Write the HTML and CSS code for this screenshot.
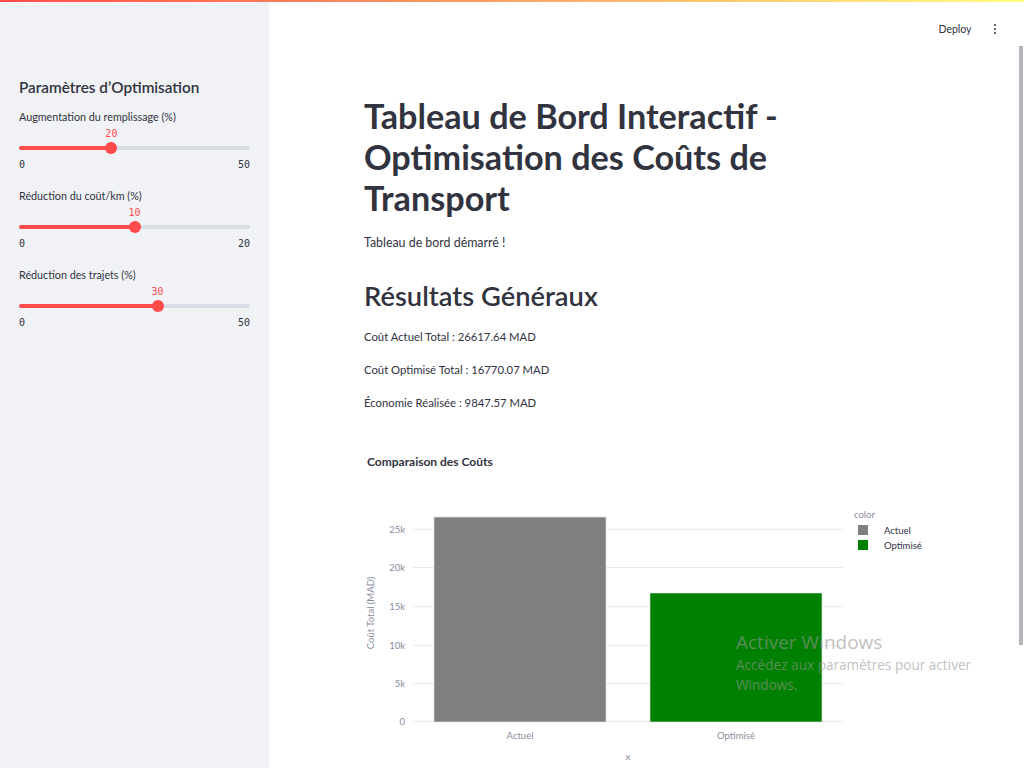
FILE: index.html
```html
<!DOCTYPE html>
<html lang="fr">
<head>
<meta charset="utf-8">
<title>Tableau de Bord</title>
<link rel="stylesheet" href="styles.css">
</head>
<body>
<div class="decoration"></div>
<div class="app">
  <aside class="sidebar">
    <h2 class="side-title">Paramètres d’Optimisation</h2>
    <div class="slider">
      <div class="slider-label">Augmentation du remplissage (%)</div>
      <div class="rail">
        <div class="track"><div class="fill" style="width:40%"></div></div>
        <div class="thumb" style="left:40%"><span class="thumb-value">20</span></div>
      </div>
      <div class="minmax"><span>0</span><span>50</span></div>
    </div>
    <div class="slider">
      <div class="slider-label">Réduction du coût/km (%)</div>
      <div class="rail">
        <div class="track"><div class="fill" style="width:50%"></div></div>
        <div class="thumb" style="left:50%"><span class="thumb-value">10</span></div>
      </div>
      <div class="minmax"><span>0</span><span>20</span></div>
    </div>
    <div class="slider">
      <div class="slider-label">Réduction des trajets (%)</div>
      <div class="rail">
        <div class="track"><div class="fill" style="width:60%"></div></div>
        <div class="thumb" style="left:60%"><span class="thumb-value">30</span></div>
      </div>
      <div class="minmax"><span>0</span><span>50</span></div>
    </div>
  </aside>
  <main class="main">
    <header class="toolbar">
      <span class="deploy">Deploy</span>
      <span class="kebab"><i></i><i></i><i></i></span>
    </header>
    <section class="content">
      <h1 class="title">Tableau de Bord Interactif -<br>Optimisation des Coûts de<br>Transport</h1>
      <p class="first">Tableau de bord démarré !</p>
      <h2 class="section">Résultats Généraux</h2>
      <p class="stat">Coût Actuel Total : 26617.64 MAD</p>
      <p class="stat">Coût Optimisé Total : 16770.07 MAD</p>
      <p class="stat">Économie Réalisée : 9847.57 MAD</p>
      <svg class="chart" width="566" height="340" viewBox="0 0 566 340">
        <text class="c-title" x="3" y="26">Comparaison des Coûts</text>
        <g class="grid">
          <line x1="49" y1="89.5" x2="479" y2="89.5"/>
          <line x1="49" y1="127.5" x2="479" y2="127.5"/>
          <line x1="49" y1="166.5" x2="479" y2="166.5"/>
          <line x1="49" y1="205.5" x2="479" y2="205.5"/>
          <line x1="49" y1="243.5" x2="479" y2="243.5"/>
          <line x1="49" y1="281.5" x2="479" y2="281.5"/>
        </g>
        <rect x="70" y="77" width="172" height="205" fill="#808080" stroke="#e5e5e5" stroke-width="0.6"/>
        <rect x="286" y="153" width="172" height="129" fill="#008000" stroke="#e5e5e5" stroke-width="0.6"/>
        <g class="ytick">
          <text x="41" y="93">25k</text>
          <text x="41" y="131">20k</text>
          <text x="41" y="170">15k</text>
          <text x="41" y="209">10k</text>
          <text x="41" y="247">5k</text>
          <text x="41" y="285">0</text>
        </g>
        <text class="ytitle" transform="translate(10 173) rotate(-90)">Coût Total (MAD)</text>
        <g class="xtick">
          <text x="156" y="299">Actuel</text>
          <text x="372" y="299">Optimisé</text>
        </g>
        <text class="xtitle" x="264" y="320">x</text>
        <text class="leg-title" x="490" y="78">color</text>
        <rect x="494" y="85" width="10" height="10" fill="#808080"/>
        <text class="leg" x="520" y="94">Actuel</text>
        <rect x="494" y="100" width="10" height="10" fill="#008000"/>
        <text class="leg" x="520" y="109">Optimisé</text>
      </svg>
    </section>
  </main>
</div>
<div class="scrollbar"></div>
<div class="watermark">
  <div class="wm-big">Activer Windows</div>
  <div class="wm-small">Accédez aux paramètres pour activer<br>Windows.</div>
</div>
</body>
</html>
```

FILE: styles.css
```css
html, body {
  margin: 0;
  padding: 0;
  width: 1024px;
  height: 768px;
  overflow: hidden;
  background: #ffffff;
  font-family: Lato, "Noto Sans", sans-serif;
  color: #31333f;
}

.decoration {
  height: 2px;
  background: linear-gradient(90deg, #ff4b4b, #fffd80);
}

.app {
  display: flex;
  height: 766px;
}

.sidebar {
  width: 269px;
  flex: none;
  background: #f0f2f6;
  padding: 75px 19px 0 19px;
  box-sizing: border-box;
  display: flex;
  flex-direction: column;
  gap: 16px;
}

.side-title {
  margin: 0 0 -4px 0;
  font-size: 15.3px;
  line-height: 20px;
  font-weight: 600;
  color: #31333f;
}

.slider {
  display: flex;
  flex-direction: column;
}

.slider-label {
  font-size: 10.75px;
  line-height: 16px;
  color: #31333f;
}

.rail {
  position: relative;
  height: 33px;
}

.track {
  position: absolute;
  left: 0;
  right: 0;
  top: 21px;
  height: 4px;
  border-radius: 2px;
  background: #d9dde6;
  overflow: hidden;
}

.fill {
  height: 100%;
  background: #ff4b4b;
}

.thumb {
  position: absolute;
  top: 17px;
  width: 12px;
  height: 12px;
  margin-left: -6px;
  border-radius: 50%;
  background: #ff4b4b;
}

.thumb-value {
  position: absolute;
  bottom: 14px;
  left: 50%;
  transform: translateX(-50%);
  font-family: "DejaVu Sans Mono", "Liberation Mono", monospace;
  font-size: 10px;
  line-height: 12px;
  color: #ff4b4b;
}

.minmax {
  display: flex;
  justify-content: space-between;
  font-family: "DejaVu Sans Mono", "Liberation Mono", monospace;
  font-size: 10px;
  line-height: 14px;
  color: #31333f;
}

.main {
  flex: 1;
  display: flex;
  flex-direction: column;
}

.toolbar {
  height: 54px;
  display: flex;
  justify-content: flex-end;
  align-items: center;
  gap: 22px;
  padding: 0 28px 4px 0;
  flex: none;
}

.deploy {
  font-size: 10.5px;
  color: #31333f;
}

.kebab {
  display: flex;
  flex-direction: column;
  gap: 1.5px;
}

.kebab i {
  display: block;
  width: 2.5px;
  height: 2.5px;
  border-radius: 50%;
  background: #31333f;
}

.content {
  padding: 35px 0 0 95px;
  width: 566px;
}

.title {
  margin: 0;
  font-size: 34.2px;
  line-height: 41px;
  font-weight: 700;
  color: #31333f;
}

p {
  margin: 0;
  font-size: 11.3px;
  line-height: 20px;
}

.first {
  margin-top: 15px;
  font-size: 12.4px;
}

.section {
  margin: 25px 0 0 0;
  font-size: 27.3px;
  line-height: 36px;
  font-weight: 600;
  color: #31333f;
}

.stat {
  margin-top: 13px;
}

.chart {
  display: block;
  margin-top: 27px;
  font-family: Lato, "Noto Sans", sans-serif;
  overflow: visible;
}

.c-title {
  font-size: 12px;
  font-weight: 700;
  fill: #31333f;
}

.grid line {
  stroke: #e8eaf0;
  stroke-width: 1;
}

.ytick text {
  font-size: 9.5px;
  fill: #8a8c9c;
  text-anchor: end;
}

.ytitle {
  font-size: 9.5px;
  fill: #8a8c9c;
  text-anchor: middle;
}

.xtick text {
  font-size: 9.5px;
  fill: #8a8c9c;
  text-anchor: middle;
}

.xtitle {
  font-size: 10px;
  fill: #8a8c9c;
  text-anchor: middle;
}

.leg-title {
  font-size: 9.5px;
  fill: #8a8c9c;
}

.leg {
  font-size: 9.5px;
  fill: #31333f;
}

.scrollbar {
  position: absolute;
  top: 46px;
  right: 1px;
  width: 4px;
  height: 599px;
  background: #b5b5bc;
}

.watermark {
  position: absolute;
  left: 736px;
  top: 630px;
  font-family: "Open Sans", "Noto Sans", sans-serif;
  color: rgba(150, 150, 150, 0.62);
  pointer-events: none;
}

.wm-big {
  font-size: 19px;
  line-height: 25px;
}

.wm-small {
  font-size: 13.6px;
  line-height: 20px;
}
```
